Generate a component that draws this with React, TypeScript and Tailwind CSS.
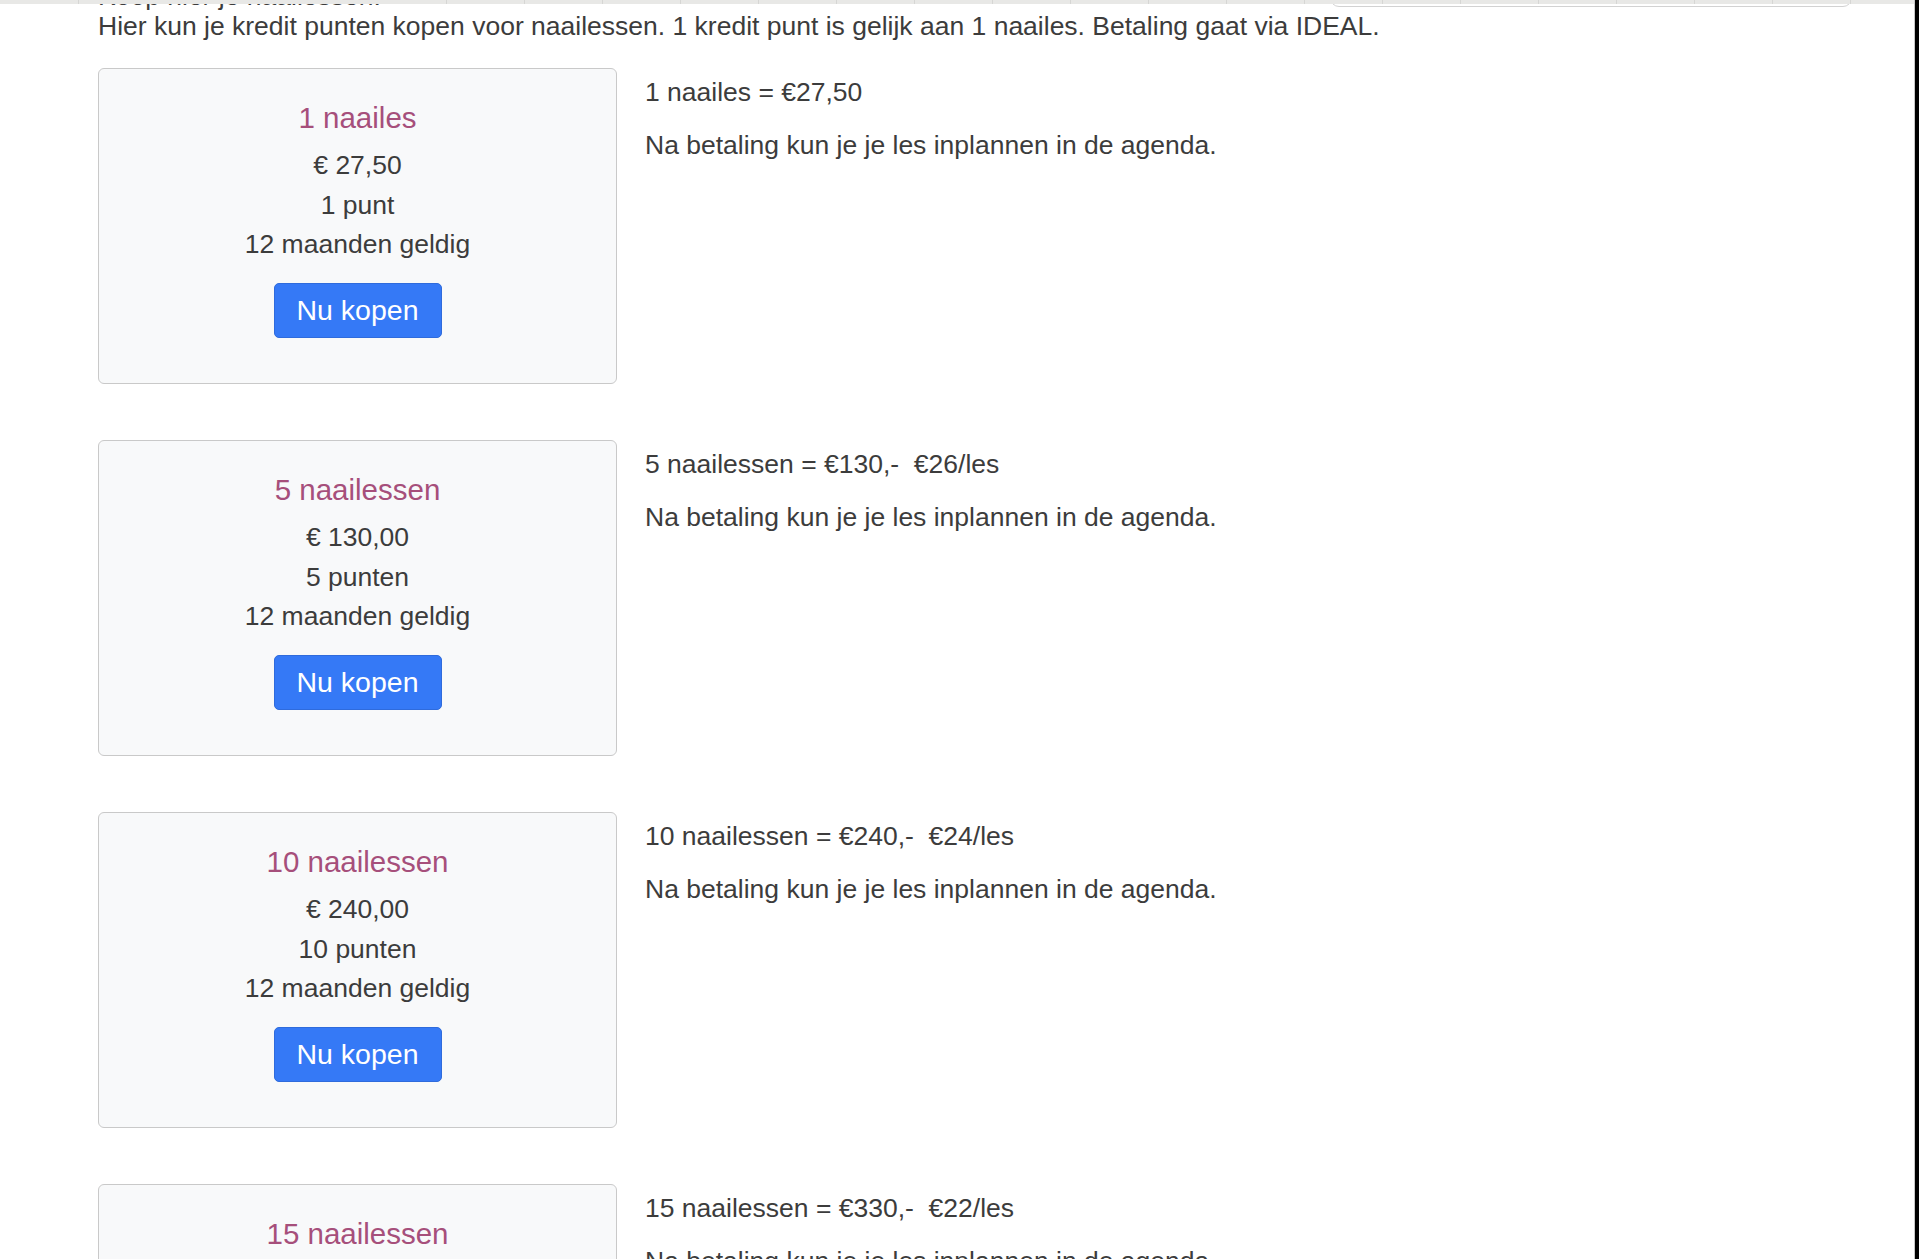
const packages = [
  {
    title: "1 naailes",
    price: "€ 27,50",
    points: "1 punt",
    summary: "1 naailes = €27,50",
  },
  {
    title: "5 naailessen",
    price: "€ 130,00",
    points: "5 punten",
    summary: "5 naailessen = €130,-\u00a0\u00a0€26/les",
  },
  {
    title: "10 naailessen",
    price: "€ 240,00",
    points: "10 punten",
    summary: "10 naailessen = €240,-\u00a0\u00a0€24/les",
  },
  {
    title: "15 naailessen",
    price: "€ 330,00",
    points: "15 punten",
    summary: "15 naailessen = €330,-\u00a0\u00a0€22/les",
  },
];

const tabs = [78, 446, 524, 602, 680, 758, 836, 914, 992, 1070, 1148, 1226, 1304, 1382, 1460, 1538, 1616, 1694, 1772, 1850];

export default function App() {
  return (
    <div className="relative h-[1259px] w-full overflow-hidden bg-white font-['Liberation_Sans',Arial,sans-serif] text-[#3c3c3c]">
      {/* strip of the page header, scrolled almost out of view */}
      <div className="absolute left-[1330px] top-[-30px] z-10 h-[37px] w-[522px] rounded-b-[9px] border border-[#d2d2d2] bg-white" />
      <div className="absolute left-0 top-0 z-20 h-[4px] w-full bg-[#e8e8e6]">
        {tabs.map((x) => (
          <div key={x} className="absolute top-0 h-full w-px bg-[#d6d6d4]" style={{ left: x }} />
        ))}
      </div>
      <div className="absolute right-0 top-0 z-30 flex h-full">
        <div className="w-px bg-[#c8c8c8]" />
        <div className="w-[4px] bg-black" />
      </div>

      <div className="pl-[98px]">
        <p className="mt-[-19px] text-[26.5px] leading-[30px]">Koop hier je naailessen.</p>
        <p className="text-[26.5px] leading-[30px]">
          Hier kun je kredit punten kopen voor naailessen. 1 kredit punt is gelijk aan 1 naailes. Betaling gaat via IDEAL.
        </p>

        <div className="mt-[27px] flex flex-col gap-[56px]">
          {packages.map((p) => (
            <div key={p.title} className="flex gap-[28px]">
              <div className="flex h-[316px] w-[519px] shrink-0 flex-col items-center rounded-[6px] border-[1.5px] border-[#c9c9c9] bg-[#f8f9fa] pt-[31px]">
                <h4 className="text-[29.5px] leading-[36px] text-[#a64f7b]">{p.title}</h4>
                <div className="mt-[10px] flex flex-col items-center text-[26.5px] leading-[39.5px]">
                  <span>{p.price}</span>
                  <span>{p.points}</span>
                  <span>12 maanden geldig</span>
                </div>
                <button className="mt-[18px] h-[55px] w-[168px] rounded-[5px] border border-[#2f6bdc] bg-[#3579f6] text-[28.5px] text-white">
                  Nu kopen
                </button>
              </div>
              <div className="flex flex-col gap-[13px] pt-[5px] text-[26.5px] leading-[39.5px]">
                <p>{p.summary}</p>
                <p>Na betaling kun je je les inplannen in de agenda.</p>
              </div>
            </div>
          ))}
        </div>
      </div>
    </div>
  );
}
